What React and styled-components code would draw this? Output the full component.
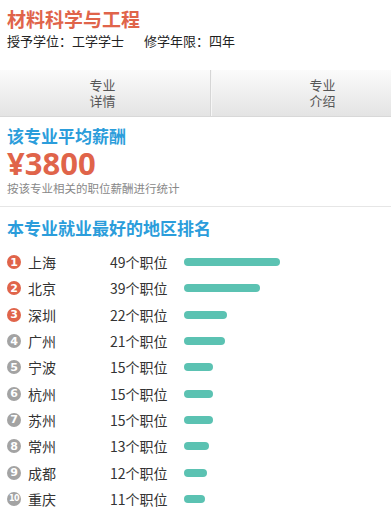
import styled, { createGlobalStyle } from "styled-components"

const regions = [
    { name: "上海", count: 49 },
    { name: "北京", count: 39 },
    { name: "深圳", count: 22 },
    { name: "广州", count: 21 },
    { name: "宁波", count: 15 },
    { name: "杭州", count: 15 },
    { name: "苏州", count: 15 },
    { name: "常州", count: 13 },
    { name: "成都", count: 12 },
    { name: "重庆", count: 11 },
]

function App() {
    return (
        <>
            <GlobalStyle />
            <Page>
                <Header>
                    <Title>材料科学与工程</Title>
                    <Meta>
                        <span>授予学位：工学学士</span>
                        <span>修学年限：四年</span>
                    </Meta>
                </Header>
                <Tabs>
                    <Tab $width={211} $inset={6}>专业<br />详情</Tab>
                    <Tab $width={222}>专业<br />介绍</Tab>
                </Tabs>
                <Section>
                    <Heading>该专业平均薪酬</Heading>
                    <Salary>¥3800</Salary>
                    <Note>按该专业相关的职位薪酬进行统计</Note>
                </Section>
                <Divider />
                <Section $top={9}>
                    <Heading>本专业就业最好的地区排名</Heading>
                    <List>
                        {regions.map((r, i) => (
                            <Row key={r.name}>
                                <Rank $top={i < 3} $small={i >= 9}>{i + 1}</Rank>
                                <City>{r.name}</City>
                                <Count>{r.count}个职位</Count>
                                <Bar style={{ width: `${Math.round(r.count * 1.95)}px` }} />
                            </Row>
                        ))}
                    </List>
                </Section>
            </Page>
        </>
    )
}

export default App

const GlobalStyle = createGlobalStyle`
    body {
        margin: 0;
        background: #fff;
        font-family: "Noto Sans CJK SC", "Noto Sans", sans-serif;
        color: #333;
    }
`

const Page = styled.div`
    width: 391px;
    height: 512px;
    overflow: hidden;
`

const Header = styled.div`
    padding: 6px 7px 0;
    height: 70px;
    box-sizing: border-box;
`

const Title = styled.h1`
    margin: 0;
    font-size: 19px;
    line-height: 26px;
    font-weight: 700;
    color: #e0644a;
`

const Meta = styled.div`
    display: flex;
    gap: 20px;
    font-size: 13px;
    line-height: 18px;
    color: #222;
`

const Tabs = styled.div`
    display: flex;
    width: 433px;
    height: 46px;
    background: linear-gradient(#fbfbfb, #e4e4e4);
    border-bottom: 1px solid #d8d8d8;
`

const Tab = styled.div`
    width: ${p => p.$width}px;
    flex-shrink: 0;
    box-sizing: border-box;
    padding-right: ${p => p.$inset || 0}px;
    display: flex;
    align-items: center;
    justify-content: center;
    text-align: center;
    font-size: 13px;
    line-height: 16px;
    color: #555;
    & + & {
        border-left: 1px solid #f6f6f6;
        box-shadow: -1px 0 0 #d6d6d6;
    }
`

const Section = styled.div`
    padding: ${p => p.$top || 7}px 7px 0;
`

const Heading = styled.h2`
    margin: 0;
    font-size: 17px;
    line-height: 24px;
    font-weight: 700;
    color: #2b9ddb;
`

const Salary = styled.div`
    font-family: "Open Sans", "Noto Sans", sans-serif;
    font-size: 31px;
    line-height: 34px;
    font-weight: 700;
    color: #e0644a;
    margin-top: -2px;
`

const Note = styled.div`
    font-size: 11.5px;
    line-height: 16px;
    color: #888;
`

const Divider = styled.div`
    height: 1px;
    background: #e6e6e6;
    margin-top: 10px;
`

const List = styled.div`
    margin-top: 9px;
    display: flex;
    flex-direction: column;
`

const Row = styled.div`
    display: flex;
    align-items: center;
    height: 26.3px;
`

const Rank = styled.span`
    width: 14px;
    height: 14px;
    border-radius: 50%;
    background: ${p => (p.$top ? "#e0644a" : "#a3a3a3")};
    color: #fff;
    font-family: "DejaVu Sans", sans-serif;
    font-size: ${p => (p.$small ? "8px" : "11px")};
    font-weight: 700;
    letter-spacing: ${p => (p.$small ? "-0.5px" : "0")};
    display: flex;
    align-items: center;
    justify-content: center;
    flex-shrink: 0;
`

const City = styled.span`
    margin-left: 7px;
    width: 82px;
    font-size: 14px;
    color: #333;
`

const Count = styled.span`
    width: 74px;
    font-size: 14px;
    color: #333;
`

const Bar = styled.span`
    height: 8px;
    border-radius: 4px;
    background: #5bc2b2;
`
